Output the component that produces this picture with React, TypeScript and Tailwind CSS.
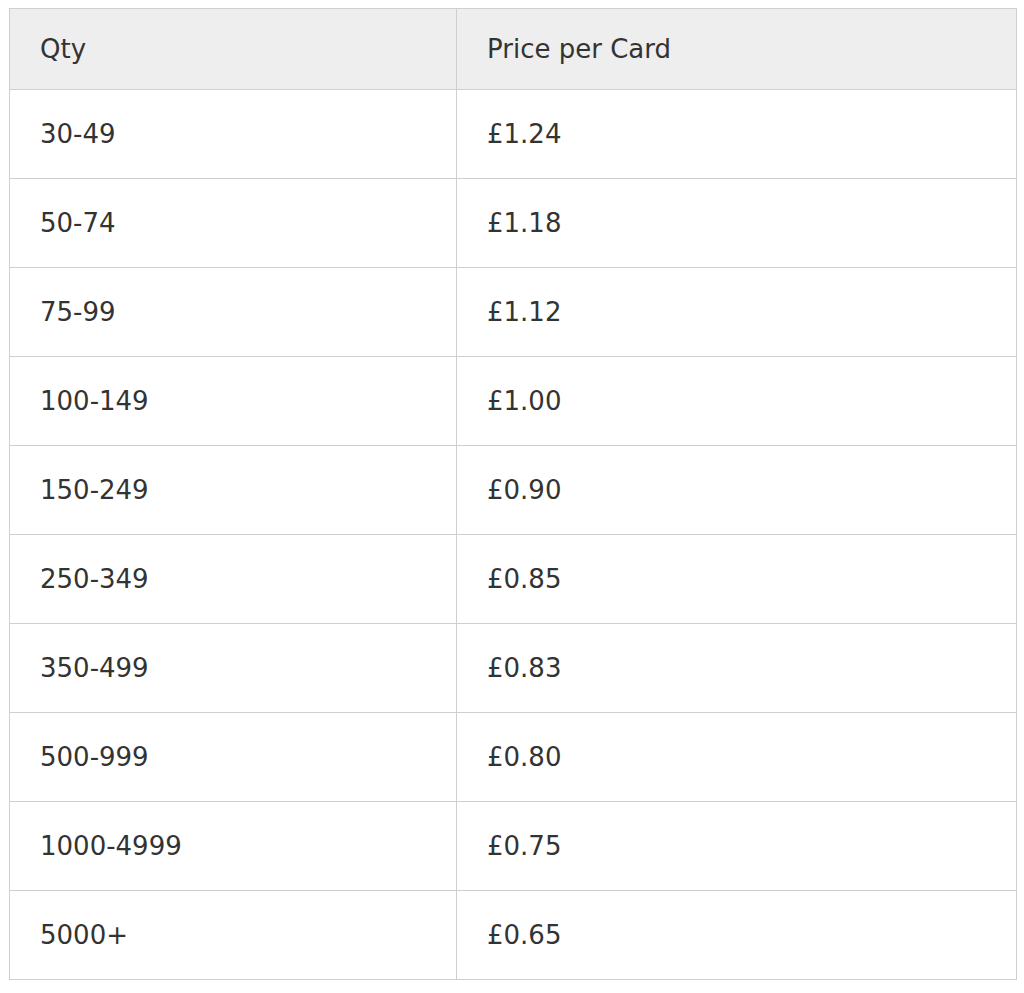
const rows: [string, string][] = [
  ["30-49", "£1.24"],
  ["50-74", "£1.18"],
  ["75-99", "£1.12"],
  ["100-149", "£1.00"],
  ["150-249", "£0.90"],
  ["250-349", "£0.85"],
  ["350-499", "£0.83"],
  ["500-999", "£0.80"],
  ["1000-4999", "£0.75"],
  ["5000+", "£0.65"],
]

export default function App() {
  return (
    <div className="min-h-screen bg-white pl-[9px] pt-[8px] font-['DejaVu_Sans',sans-serif] text-[26px] text-[#333]">
      <table className="w-[1008px] border-collapse border border-[#cfcfcf] table-fixed">
        <colgroup>
          <col className="w-[447px]" />
          <col />
        </colgroup>
        <thead>
          <tr className="h-[81px] bg-[#eeeeee]">
            <th className="border border-[#cfcfcf] pl-[30px] text-left font-normal">Qty</th>
            <th className="border border-[#cfcfcf] pl-[30px] text-left font-normal">Price per Card</th>
          </tr>
        </thead>
        <tbody>
          {rows.map(([qty, price]) => (
            <tr key={qty} className="h-[89px]">
              <td className="border border-[#cfcfcf] pl-[30px]">{qty}</td>
              <td className="border border-[#cfcfcf] pl-[30px]">{price}</td>
            </tr>
          ))}
        </tbody>
      </table>
    </div>
  )
}
